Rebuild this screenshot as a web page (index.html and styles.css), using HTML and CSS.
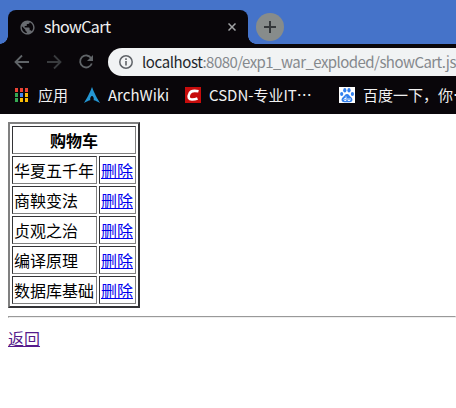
FILE: index.html
```html
<!DOCTYPE html>
<html lang="zh-CN">
<head>
<meta charset="utf-8">
<title>showCart</title>
<link rel="stylesheet" href="styles.css">
</head>
<body>
<header class="browser">
  <div class="tabs">
    <div class="tab">
      <svg class="globe" viewBox="0 0 24 24"><path fill="#686b70" d="M12 2C6.480 2 2 6.480 2 12s4.480 10 10 10 10-4.480 10-10S17.520 2 12 2zm-1 17.930c-3.950-.49-7-3.850-7-7.930 0-.62.08-1.210.21-1.790L9 15v1c0 1.100.9 2 2 2v1.930zm6.900-2.540c-.26-.81-1-1.390-1.900-1.390h-1v-3c0-.55-.45-1-1-1H8v-2h2c.55 0 1-.45 1-1V7h2c1.100 0 2-.9 2-2v-.41c2.930 1.190 5 4.060 5 7.410 0 2.080-.8 3.970-2.100 5.390z"/></svg>
      <span class="tab-title">showCart</span>
      <svg class="close" viewBox="0 0 8 8"><path d="M.5.5l7 7M7.500.5l-7 7" stroke="#a1a3a5" stroke-width="1.500"/></svg>
    </div>
    <div class="new-tab"><svg width="12" height="12" viewBox="0 0 12 12"><path d="M6 0v12M0 6h12" stroke="#34383b" stroke-width="2"/></svg></div>
  </div>
  <div class="toolbar">
    <svg class="nav back" viewBox="0 0 16 16"><path d="M15 8H2M8 1.500L1.500 8 8 14.500"/></svg>
    <svg class="nav forward" viewBox="0 0 16 16"><path d="M1 8h13M8 1.500L14.500 8 8 14.500"/></svg>
    <svg class="nav reload" viewBox="0 0 16 16"><path d="M13.200 4.200A6 6 0 1 0 13.800 9.500"/><path class="solid" d="M15 1v6H9z"/></svg>
    <div class="address">
      <svg class="info" viewBox="0 0 14 14"><circle cx="7" cy="7" r="6.200" fill="none" stroke="#5f6368" stroke-width="1.500"/><path d="M7 6v4.500M7 3.300v1.600" stroke="#5f6368" stroke-width="1.600"/></svg>
      <span class="url">localhost<span class="path">:8080/exp1_war_exploded/showCart.js</span></span>
    </div>
  </div>
  <nav class="bookmarks">
    <div class="bookmark apps">
      <svg width="13" height="14" viewBox="0 0 13 14"><path fill="#ea4335" d="M0 0h3v4H0zM5 0h3v4H5zM10 0h3v4h-3z"/><path fill="#34a853" d="M0 5h3v4H0zM0 10h3v4H0z"/><path fill="#4285f4" d="M5 5h3v4H5z"/><path fill="#fbbc05" d="M10 5h3v4h-3zM5 10h3v4H5zM10 10h3v4h-3z"/></svg>
      <span>应用</span>
    </div>
    <div class="bookmark arch">
      <svg width="16" height="16" viewBox="0 0 16 16"><path fill="#2496d3" d="M8 0C6.700 3.400 4.500 8.700 0 16c2.700-1.600 4.500-2.300 6.300-2.700C5.800 10.800 7 9 8 9s2.200 1.800 1.700 4.300c1.800.4 3.600 1.100 6.300 2.700C11.500 8.700 9.300 3.400 8 0z"/></svg>
      <span>ArchWiki</span>
    </div>
    <div class="bookmark csdn">
      <svg width="16" height="16" viewBox="0 0 16 16"><path fill="#c70c0c" d="M0 0h16v16H0z"/><path d="M13.500 4.300C10 3.500 6 3.300 4.500 6.500 2.500 10.500 4 12.500 7 12.500q3 0 5.500-1" fill="none" stroke="#fff" stroke-width="2.700"/></svg>
      <span>CSDN-专业IT⋯</span>
    </div>
    <div class="bookmark baidu">
      <svg width="16" height="16" viewBox="0 0 16 16"><path fill="#fff" d="M0 0h16v16H0z"/><g fill="#3280ee"><ellipse cx="2.700" cy="7" rx="1.600" ry="2"/><ellipse cx="5.800" cy="3.200" rx="1.600" ry="2.200"/><ellipse cx="10" cy="3.200" rx="1.600" ry="2.200"/><ellipse cx="13.400" cy="7" rx="1.600" ry="2"/><path d="M8 7c2 0 2.500 2 4.200 3.300 2.300 2 1.200 5-1.400 5H5.200c-2.600 0-3.700-3-1.400-5C5.500 9 6 7 8 7z"/></g><path d="M7 9.500v4H5.500q-1-1 0-2H7M9 11.200v2.300h2v-2.300" fill="none" stroke="#fff" stroke-width=".9"/></svg>
      <span>百度一下，你⋯</span>
    </div>
  </nav>
</header>
<main class="page">
  <table class="cart">
    <tr><th colspan="2">购物车</th></tr>
    <tr><td class="name">华夏五千年</td><td class="action"><a href="#">删除</a></td></tr>
    <tr><td class="name">商鞅变法</td><td class="action"><a href="#">删除</a></td></tr>
    <tr><td class="name">贞观之治</td><td class="action"><a href="#">删除</a></td></tr>
    <tr><td class="name">编译原理</td><td class="action"><a href="#">删除</a></td></tr>
    <tr><td class="name">数据库基础</td><td class="action"><a href="#">删除</a></td></tr>
  </table>
  <hr>
  <a class="return" href="#">返回</a>
</main>
</body>
</html>
```
FILE: styles.css
```css
* { box-sizing: border-box; }
html, body { margin: 0; height: 100%; overflow: hidden; }
body { background: #fff; color: #000; font: 16px/24px "Noto Sans CJK SC", sans-serif; }
svg { display: block; flex: none; }

.browser { height: 114px; overflow: hidden; background: #09060a; white-space: nowrap; }
.tabs { height: 44px; padding: 10px 0 0 8px; display: flex; background: #4573c9; }
.tab {
  position: relative; width: 240px; height: 34px; padding: 0 12px;
  display: flex; align-items: center; background: #09060a; border-radius: 8px 8px 0 0;
}
.tab::before, .tab::after { content: ""; position: absolute; bottom: 0; width: 8px; height: 8px; }
.tab::before { left: -8px; background: radial-gradient(circle at 0 0, transparent 7.5px, #09060a 8px); }
.tab::after { right: -8px; background: radial-gradient(circle at 100% 0, transparent 7.5px, #09060a 8px); }
.globe { width: 17px; height: 17px; margin-left: -1px; }
.tab-title { flex: 1; margin-left: 8px; color: #f1f1f1; font-size: 16px; letter-spacing: -0.6px; position: relative; top: -1px; }
.close { width: 8px; height: 8px; }
.new-tab {
  width: 28px; height: 28px; margin: 3px 0 0 8px; border-radius: 50%;
  display: flex; align-items: center; justify-content: center; background: #878c8b;
}

.toolbar { height: 36px; padding: 4px 0 4px 14px; display: flex; align-items: center; }
.nav { width: 16px; height: 16px; fill: none; stroke: #606468; stroke-width: 1.8; }
.forward { margin-left: 16px; stroke: #393b3e; }
.reload { margin-left: 16px; }
.solid { fill: #606468; stroke: none; }
.address {
  width: 500px; flex: none; height: 28px; margin-left: 14px; padding-left: 11px;
  display: flex; align-items: center; background: #f1f3f4; border-radius: 14px 0 0 14px;
}
.info { width: 14px; height: 14px; }
.url { margin-left: 9px; color: #24272b; font-size: 15px; letter-spacing: -0.4px; }
.path { color: #85898d; letter-spacing: -0.55px; }

.bookmarks { height: 30px; padding-left: 15px; display: flex; align-items: center; color: #f1f1f1; font-size: 15px; }
.bookmark { display: flex; align-items: center; flex: none; }
.apps { width: 69px; gap: 10px; }
.arch { width: 101px; gap: 8px; }
.csdn { width: 154px; gap: 8px; }
.baidu { gap: 8px; }

.page { padding: 8px 8px 0; margin-right: -8px; }
.cart { width: 132px; border: 2px solid; border-color: #808080 #333336 #333336 #808080; border-spacing: 2px; }
.cart th, .cart td { height: 28px; padding: 1px; border: 1px solid; border-color: #333336 #808080 #808080 #333336; white-space: nowrap; }
.name { width: 85px; }
.action { width: 37px; }
a { color: #0000ee; }
hr { margin: 8px 0; border: 1px solid; border-color: #999 #eee #eee #999; height: 2px; }
.return { color: #551a8b; }
```
